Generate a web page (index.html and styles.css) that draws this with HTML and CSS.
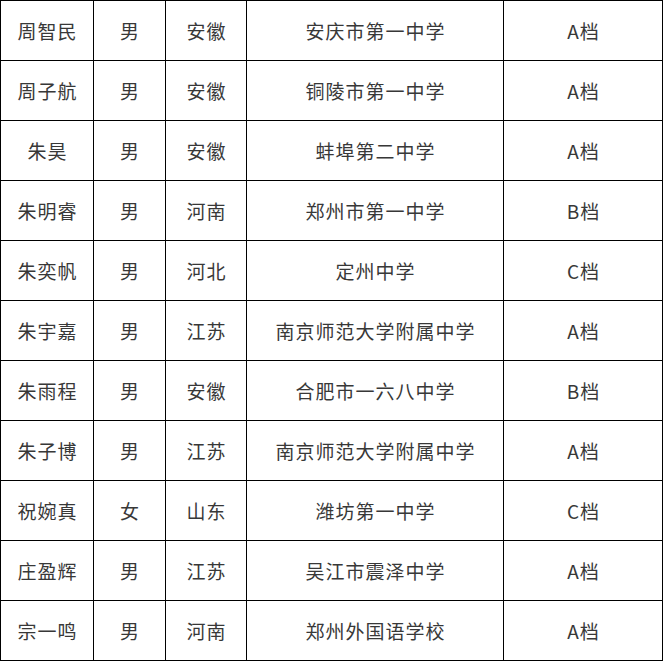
FILE: index.html
```html
<!DOCTYPE html>
<html lang="zh-CN">
<head>
<meta charset="utf-8">
<title>名单</title>
<link rel="stylesheet" href="styles.css">
</head>
<body>
<div class="table">
  <div class="cell">周智民</div><div class="cell">男</div><div class="cell">安徽</div><div class="cell">安庆市第一中学</div><div class="cell">A档</div>
  <div class="cell">周子航</div><div class="cell">男</div><div class="cell">安徽</div><div class="cell">铜陵市第一中学</div><div class="cell">A档</div>
  <div class="cell">朱昊</div><div class="cell">男</div><div class="cell">安徽</div><div class="cell">蚌埠第二中学</div><div class="cell">A档</div>
  <div class="cell">朱明睿</div><div class="cell">男</div><div class="cell">河南</div><div class="cell">郑州市第一中学</div><div class="cell">B档</div>
  <div class="cell">朱奕帆</div><div class="cell">男</div><div class="cell">河北</div><div class="cell">定州中学</div><div class="cell">C档</div>
  <div class="cell">朱宇嘉</div><div class="cell">男</div><div class="cell">江苏</div><div class="cell">南京师范大学附属中学</div><div class="cell">A档</div>
  <div class="cell">朱雨程</div><div class="cell">男</div><div class="cell">安徽</div><div class="cell">合肥市一六八中学</div><div class="cell">B档</div>
  <div class="cell">朱子博</div><div class="cell">男</div><div class="cell">江苏</div><div class="cell">南京师范大学附属中学</div><div class="cell">A档</div>
  <div class="cell">祝婉真</div><div class="cell">女</div><div class="cell">山东</div><div class="cell">潍坊第一中学</div><div class="cell">C档</div>
  <div class="cell">庄盈辉</div><div class="cell">男</div><div class="cell">江苏</div><div class="cell">吴江市震泽中学</div><div class="cell">A档</div>
  <div class="cell">宗一鸣</div><div class="cell">男</div><div class="cell">河南</div><div class="cell">郑州外国语学校</div><div class="cell">A档</div>
</div>
</body>
</html>
```
FILE: styles.css
```css
html, body {
  margin: 0;
  padding: 0;
  background: #ffffff;
}
.table {
  display: grid;
  grid-template-columns: 92px 71px 80px 256px 158px;
  grid-auto-rows: 59px;
  gap: 1px;
  padding: 1px;
  background: #000000;
  width: 663px;
  box-sizing: border-box;
}
.cell {
  background: #ffffff;
  display: flex;
  align-items: center;
  justify-content: center;
  font-family: "Noto Sans CJK SC", "Noto Sans", sans-serif;
  font-size: 19px;
  letter-spacing: 1px;
  padding-left: 1px;
  color: #383838;
  white-space: nowrap;
}
```
